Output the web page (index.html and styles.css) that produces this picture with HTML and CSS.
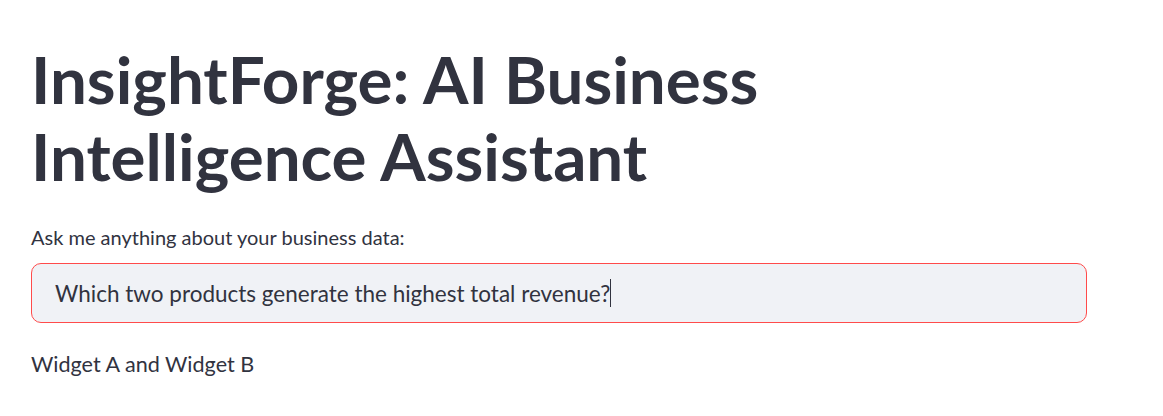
FILE: index.html
```html
<!DOCTYPE html>
<html lang="en">
<head>
<meta charset="utf-8">
<title>InsightForge</title>
<link rel="stylesheet" href="styles.css">
</head>
<body>
<main class="app">
  <h1 class="title">InsightForge: AI Business Intelligence Assistant</h1>
  <div class="field">
    <label class="field-label" for="q">Ask me anything about your business data:</label>
    <div class="input-box">
      <span class="input-text">Which two products generate the highest total revenue?</span><span class="caret"></span>
    </div>
  </div>
  <p class="answer">Widget A and Widget B</p>
</main>
</body>
</html>
```

FILE: styles.css
```css
html, body {
  margin: 0;
  padding: 0;
  background: #ffffff;
}
body {
  font-family: "Source Sans Pro", Lato, "Liberation Sans", sans-serif;
  color: #31333f;
}
.app {
  width: 1056px;
  padding: 40px 0 0 31px;
}
.title {
  margin: 0;
  font-size: 65.5px;
  font-weight: 700;
  line-height: 77px;
  width: 800px;
  color: #31333f;
}
.field {
  margin-top: 30px;
  display: flex;
  flex-direction: column;
  gap: 12px;
}
.field-label {
  font-size: 20px;
  line-height: 27px;
}
.input-box {
  box-sizing: border-box;
  height: 60px;
  border: 1px solid #ff4b4b;
  border-radius: 10px;
  background: #f0f2f6;
  display: flex;
  align-items: center;
  padding-left: 23px;
  font-size: 22.5px;
}
.caret {
  display: inline-block;
  width: 1px;
  height: 28px;
  background: #31333f;
}
.answer {
  margin: 25px 0 0;
  font-size: 21.6px;
  line-height: 32px;
}
```
